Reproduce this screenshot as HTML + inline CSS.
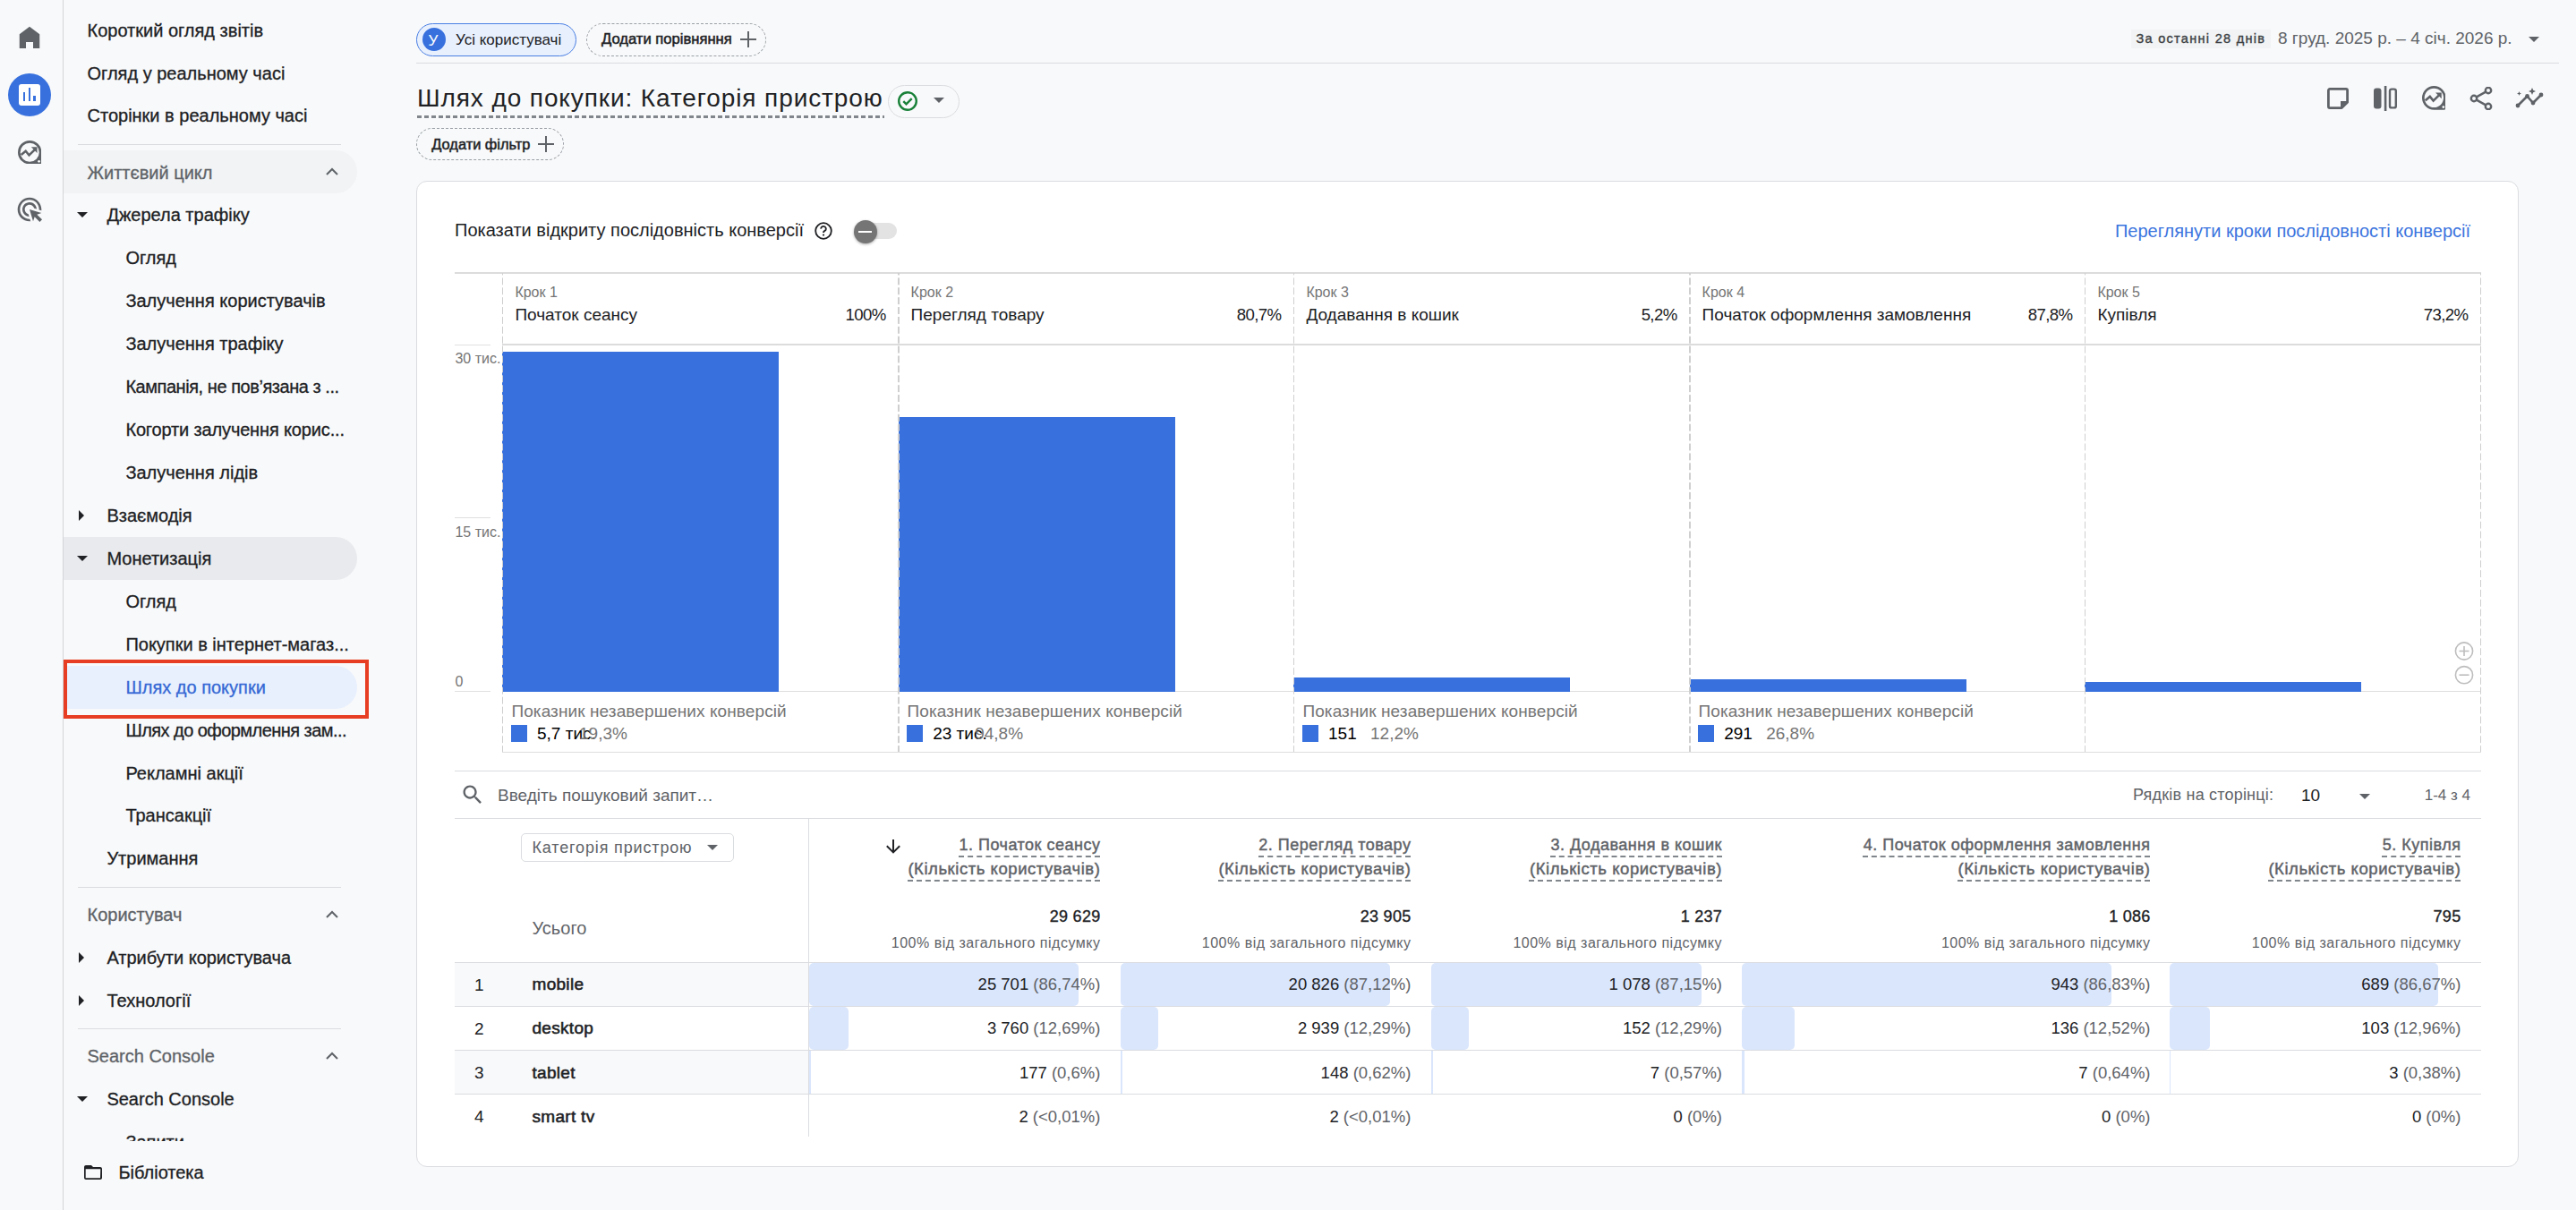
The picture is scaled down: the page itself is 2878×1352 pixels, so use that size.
<!DOCTYPE html>
<html><head><meta charset="utf-8"><style>
html,body{margin:0;padding:0;}
body{width:2878px;height:1352px;overflow:hidden;background:#f8f9fa;position:relative;font-family:"Liberation Sans",sans-serif;}
.t{position:absolute;line-height:1;white-space:nowrap;}
.r{position:absolute;}
.tri-d{width:0;height:0;border-left:6px solid transparent;border-right:6px solid transparent;border-top:6px solid #5f6368;}
.tri-r{width:0;height:0;border-top:6px solid transparent;border-bottom:6px solid transparent;border-left:6px solid #202124;}
</style></head><body>
<div class="r" style="left:70.0px;top:0.0px;width:1.0px;height:1352.0px;background:#d3d5d8;"></div>
<svg class="r" style="left:18px;top:26px" width="30" height="30" viewBox="0 0 24 24"><path fill="#5f6368" d="M3 9.8 12 3l9 6.8V22.4h-5.8v-5.6H8.8v5.6H3z"/></svg>
<div class="r" style="left:9px;top:82px;width:48px;height:48px;border-radius:50%;background:#3871de"></div>
<div class="r" style="left:21px;top:94px;width:24px;height:24px;border-radius:3px;background:#fff"></div>
<div class="r" style="left:25.8px;top:103.0px;width:2.4px;height:9.5px;background:#3871de;"></div>
<div class="r" style="left:31.8px;top:98.0px;width:2.4px;height:14.5px;background:#3871de;"></div>
<div class="r" style="left:37.2px;top:107.0px;width:2.4px;height:5.5px;background:#3871de;"></div>
<svg class="r" style="left:20px;top:156.8px" width="26.4" height="26.4" viewBox="0 0 26 26"><path fill-rule="evenodd" fill="#5f6368" d="M0 13A13 13 0 0 1 26 13V24Q26 26 24 26H13A13 13 0 0 1 0 13ZM2.6 13A10.4 10.4 0 1 0 23.4 13A10.4 10.4 0 1 0 2.6 13Z"/><path fill="none" stroke="#5f6368" stroke-width="2.5" stroke-linejoin="miter" d="M3.6 15.8L8.6 11.6L12.3 16.2L19.2 9.4"/><path fill="#5f6368" d="M14.6 7.2H21.2V13.8Z"/><circle cx="23.2" cy="23" r="1.3" fill="#fff"/></svg>
<svg class="r" style="left:17.4px;top:217.6px" width="32" height="32" viewBox="0 0 24 24"><path fill="#5f6368" d="M11.71 17.99C8.53 17.84 6 15.22 6 12c0-3.31 2.69-6 6-6 3.22 0 5.84 2.53 5.99 5.71l-2.1-.63C15.48 9.31 13.89 8 12 8c-2.21 0-4 1.79-4 4 0 1.89 1.31 3.48 3.08 3.89l.63 2.1zM22 12c0 .3-.01.6-.04.9l-1.970-.59c.01-.1.01-.21.01-.31 0-4.42-3.58-8-8-8s-8 3.58-8 8 3.58 8 8 8c.1 0 .21 0 .31-.01l.59 1.97c-.3.03-.6.04-.9.04-5.52 0-10-4.48-10-10S6.48 2 12 2s10 4.48 10 10zm-3.77 4.26L22 15l-10-3 3 10 1.26-3.77 4.27 4.27 1.98-1.98-4.28-4.26z"/></svg>
<div class="t" style="left:97.5px;top:23.8px;font-size:20px;color:#202124;-webkit-text-stroke:0.3px #202124">Короткий огляд звітів</div>
<div class="t" style="left:97.5px;top:71.6px;font-size:20px;color:#202124;-webkit-text-stroke:0.3px #202124">Огляд у реальному часі</div>
<div class="t" style="left:97.5px;top:119.3px;font-size:20px;color:#202124;-webkit-text-stroke:0.3px #202124">Сторінки в реальному часі</div>
<div class="r" style="left:87.0px;top:161.0px;width:294.0px;height:1.0px;background:#dadce0;"></div>
<div class="r" style="left:71px;top:168px;width:328px;height:48px;background:#f1f3f4;border-radius:0 24px 24px 0"></div>
<div class="t" style="left:97.5px;top:182.5px;font-size:20px;color:#5f6368;-webkit-text-stroke:0.3px #5f6368">Життєвий цикл</div>
<svg class="r" style="left:361px;top:182.4px" width="20" height="20" viewBox="0 0 20 20"><path fill="none" stroke="#5f6368" stroke-width="2" d="M4 13l6-6 6 6"/></svg>
<div class="r tri-d" style="left:86px;top:237.0px;border-top-color:#202124"></div>
<div class="t" style="left:119.4px;top:230.1px;font-size:20px;color:#202124;-webkit-text-stroke:0.3px #202124">Джерела трафіку</div>
<div class="t" style="left:140.4px;top:278.1px;font-size:20px;color:#202124;-webkit-text-stroke:0.3px #202124">Огляд</div>
<div class="t" style="left:140.4px;top:326.1px;font-size:20px;color:#202124;-webkit-text-stroke:0.3px #202124">Залучення користувачів</div>
<div class="t" style="left:140.4px;top:374.1px;font-size:20px;color:#202124;-webkit-text-stroke:0.3px #202124">Залучення трафіку</div>
<div class="t" style="left:140.4px;top:422.1px;font-size:20px;color:#202124;letter-spacing:-0.45px;-webkit-text-stroke:0.3px #202124">Кампанія, не пов’язана з ...</div>
<div class="t" style="left:140.4px;top:470.1px;font-size:20px;color:#202124;letter-spacing:-0.15px;-webkit-text-stroke:0.3px #202124">Когорти залучення корис...</div>
<div class="t" style="left:140.4px;top:518.1px;font-size:20px;color:#202124;-webkit-text-stroke:0.3px #202124">Залучення лідів</div>
<div class="r tri-r" style="left:88px;top:570.0px"></div>
<div class="t" style="left:119.4px;top:566.1px;font-size:20px;color:#202124;-webkit-text-stroke:0.3px #202124">Взаємодія</div>
<div class="r" style="left:71px;top:600px;width:328px;height:48px;background:#e8eaed;border-radius:0 24px 24px 0"></div>
<div class="r tri-d" style="left:86px;top:621.0px;border-top-color:#202124"></div>
<div class="t" style="left:119.4px;top:614.1px;font-size:20px;color:#202124;-webkit-text-stroke:0.3px #202124">Монетизація</div>
<div class="t" style="left:140.4px;top:662.1px;font-size:20px;color:#202124;-webkit-text-stroke:0.3px #202124">Огляд</div>
<div class="t" style="left:140.4px;top:710.1px;font-size:20px;color:#202124;-webkit-text-stroke:0.3px #202124">Покупки в інтернет-магаз...</div>
<div class="r" style="left:71px;top:744px;width:328px;height:48px;background:#e8f0fe;border-radius:0 24px 24px 0"></div>
<div class="t" style="left:140.4px;top:758.1px;font-size:20px;color:#3568d4;-webkit-text-stroke:0.3px #3568d4">Шлях до покупки</div>
<div class="r" style="left:71px;top:737px;width:341px;height:66px;border:4px solid #e73d22;box-sizing:border-box"></div>
<div class="t" style="left:140.4px;top:806.1px;font-size:20px;color:#202124;letter-spacing:-0.55px;-webkit-text-stroke:0.3px #202124">Шлях до оформлення зам...</div>
<div class="t" style="left:140.4px;top:854.1px;font-size:20px;color:#202124;-webkit-text-stroke:0.3px #202124">Рекламні акції</div>
<div class="t" style="left:140.4px;top:901.1px;font-size:20px;color:#202124;-webkit-text-stroke:0.3px #202124">Трансакції</div>
<div class="t" style="left:119.4px;top:949.1px;font-size:20px;color:#202124;-webkit-text-stroke:0.3px #202124">Утримання</div>
<div class="r" style="left:87.0px;top:991.0px;width:294.0px;height:1.0px;background:#dadce0;"></div>
<div class="t" style="left:97.5px;top:1012.1px;font-size:20px;color:#5f6368;-webkit-text-stroke:0.3px #5f6368">Користувач</div>
<svg class="r" style="left:361px;top:1012.0px" width="20" height="20" viewBox="0 0 20 20"><path fill="none" stroke="#5f6368" stroke-width="2" d="M4 13l6-6 6 6"/></svg>
<div class="r tri-r" style="left:88px;top:1064.0px"></div>
<div class="t" style="left:119.4px;top:1060.1px;font-size:20px;color:#202124;-webkit-text-stroke:0.3px #202124">Атрибути користувача</div>
<div class="r tri-r" style="left:88px;top:1112.0px"></div>
<div class="t" style="left:119.4px;top:1108.1px;font-size:20px;color:#202124;-webkit-text-stroke:0.3px #202124">Технології</div>
<div class="r" style="left:87.0px;top:1149.0px;width:294.0px;height:1.0px;background:#dadce0;"></div>
<div class="t" style="left:97.5px;top:1170.1px;font-size:20px;color:#5f6368;-webkit-text-stroke:0.3px #5f6368">Search Console</div>
<svg class="r" style="left:361px;top:1170.0px" width="20" height="20" viewBox="0 0 20 20"><path fill="none" stroke="#5f6368" stroke-width="2" d="M4 13l6-6 6 6"/></svg>
<div class="r tri-d" style="left:86px;top:1225.0px;border-top-color:#202124"></div>
<div class="t" style="left:119.4px;top:1218.1px;font-size:20px;color:#202124;-webkit-text-stroke:0.3px #202124">Search Console</div>
<div class="t" style="left:140.4px;top:1266.1px;font-size:20px;color:#202124;-webkit-text-stroke:0.3px #202124">Запити</div>
<div class="r" style="left:71.0px;top:1275.0px;width:394.0px;height:77.0px;background:#f8f9fa;"></div>
<svg class="r" style="left:92px;top:1298px" width="24" height="24" viewBox="0 0 24 24"><path fill="#202124" d="M20 6h-8l-2-2H4c-1.1 0-1.99.9-1.99 2L2 18c0 1.1.9 2 2 2h16c1.1 0 2-.9 2-2V8c0-1.1-.9-2-2-2zm0 12.3H3.7V8.2h16.6z"/></svg>
<div class="t" style="left:132.4px;top:1300.1px;font-size:20px;color:#202124;-webkit-text-stroke:0.3px #202124">Бібліотека</div>
<div class="r" style="left:465px;top:26px;width:179px;height:37px;box-sizing:border-box;border:1.5px solid #4a7fe3;border-radius:19px;background:#e8f0fe"></div>
<div class="r" style="left:472px;top:31px;width:26px;height:26px;border-radius:50%;background:#3871de"></div>
<div class="t" style="left:478.5px;top:36.6px;font-size:17px;color:#fff">У</div>
<div class="t" style="left:509.0px;top:35.6px;font-size:17px;color:#202124">Усі користувачі</div>
<div class="r" style="left:655px;top:26px;width:201px;height:37px;box-sizing:border-box;border:1px dashed #9aa0a6;border-radius:19px"></div>
<div class="t" style="left:672.0px;top:35.9px;font-size:16.6px;color:#202124;-webkit-text-stroke:0.5px #202124">Додати порівняння</div>
<div class="r" style="left:827.4px;top:43.0px;width:18.0px;height:2.0px;background:#5f6368;"></div>
<div class="r" style="left:835.4px;top:35.0px;width:2.0px;height:18.0px;background:#5f6368;"></div>
<div class="r" style="left:465.0px;top:70.0px;width:2394.0px;height:1.0px;background:#dadce0;"></div>
<div class="r" style="left:2381.0px;top:33.0px;width:156.0px;height:21.0px;background:#f1f3f4;"></div>
<div class="t" style="left:2386.4px;top:35.9px;font-size:14.5px;color:#3c4043;letter-spacing:1.3px;-webkit-text-stroke:0.35px #3c4043">За останні 28 днів</div>
<div class="t" style="left:2545.0px;top:32.9px;font-size:19px;color:#5f6368">8 груд. 2025 р. – 4 січ. 2026 р.</div>
<div class="r tri-d" style="left:2825px;top:40.5px"></div>
<div class="t" style="left:466.0px;top:96.3px;font-size:28px;color:#202124;letter-spacing:0.9px">Шлях до покупки: Категорія пристрою</div>
<div class="r" style="left:466px;top:129px;width:522px;height:3px;background:repeating-linear-gradient(90deg,#80868b 0 5px,transparent 5px 8px)"></div>
<div class="r" style="left:992px;top:95px;width:80px;height:37px;box-sizing:border-box;border:1px solid #dadce0;border-radius:19px"></div>
<svg class="r" style="left:1002px;top:101px" width="24" height="24" viewBox="0 0 24 24"><circle cx="12" cy="12" r="9.8" fill="none" stroke="#188038" stroke-width="2.4"/><path fill="none" stroke="#188038" stroke-width="2.4" d="M7.3 12.2l3.2 3.2 6.2-6.2"/></svg>
<div class="r tri-d" style="left:1043px;top:109px"></div>
<div class="r" style="left:465px;top:143px;width:165px;height:36px;box-sizing:border-box;border:1px dashed #9aa0a6;border-radius:18px"></div>
<div class="t" style="left:482.3px;top:153.1px;font-size:16.4px;color:#202124;-webkit-text-stroke:0.5px #202124">Додати фільтр</div>
<div class="r" style="left:601.4px;top:160.0px;width:18.0px;height:2.0px;background:#5f6368;"></div>
<div class="r" style="left:609.4px;top:152.0px;width:2.0px;height:18.0px;background:#5f6368;"></div>
<svg class="r" style="left:2599px;top:97px" width="26" height="26" viewBox="0 0 26 26"><path fill="none" stroke="#5f6368" stroke-width="2.8" stroke-linejoin="round" d="M4 2.4h18a1.6 1.6 0 0 1 1.6 1.6v13.2l-6.4 6.4H4a1.6 1.6 0 0 1-1.6-1.6V4A1.6 1.6 0 0 1 4 2.4z"/><path fill="#5f6368" d="M16 16h7.6l-7.6 7.6z"/></svg>
<svg class="r" style="left:2651px;top:96px" width="28" height="28" viewBox="0 0 28 28"><rect x="1" y="2.5" width="8.5" height="23" rx="3" fill="#5f6368"/><rect x="12.8" y="0" width="2.6" height="28" fill="#5f6368"/><rect x="19" y="3.6" width="6.8" height="20.8" rx="2" fill="none" stroke="#5f6368" stroke-width="2.4"/></svg>
<svg class="r" style="left:2705.5px;top:96.3px" width="26.7" height="26.7" viewBox="0 0 26 26"><path fill-rule="evenodd" fill="#5f6368" d="M0 13A13 13 0 0 1 26 13V24Q26 26 24 26H13A13 13 0 0 1 0 13ZM2.6 13A10.4 10.4 0 1 0 23.4 13A10.4 10.4 0 1 0 2.6 13Z"/><path fill="none" stroke="#5f6368" stroke-width="2.5" stroke-linejoin="miter" d="M3.6 15.8L8.6 11.6L12.3 16.2L19.2 9.4"/><path fill="#5f6368" d="M14.6 7.2H21.2V13.8Z"/><circle cx="23.2" cy="23" r="1.3" fill="#fff"/></svg>
<svg class="r" style="left:2758px;top:97px" width="28" height="26" viewBox="0 0 28 26"><circle cx="22" cy="4" r="3.2" fill="none" stroke="#5f6368" stroke-width="2.4"/><circle cx="6" cy="13" r="3.2" fill="none" stroke="#5f6368" stroke-width="2.4"/><circle cx="22" cy="22" r="3.2" fill="none" stroke="#5f6368" stroke-width="2.4"/><path stroke="#5f6368" stroke-width="2.4" d="M8.8 11.4l10.4-5.8M8.8 14.6l10.4 5.8"/></svg>
<svg class="r" style="left:2810px;top:97.5px" width="34" height="28" viewBox="0 0 34 28"><path fill="none" stroke="#5f6368" stroke-width="2.6" stroke-linecap="round" stroke-linejoin="round" d="M3 20l10.5-10.5 6.5 7.5 9-9"/><circle cx="3" cy="20" r="2.4" fill="#5f6368"/><circle cx="13.5" cy="9.5" r="2.4" fill="#5f6368"/><circle cx="20" cy="17" r="2.4" fill="#5f6368"/><circle cx="29" cy="8" r="2.4" fill="#5f6368"/><path fill="#5f6368" d="M19 0l1.2 2.8L23 4l-2.8 1.2L19 8l-1.2-2.8L15 4l2.8-1.2z M4.5 4l.7 1.8L7 6.5l-1.8.7L4.5 9l-.7-1.8L2 6.5l1.8-.7z"/></svg>
<div class="r" style="left:465px;top:202px;width:2349px;height:1102px;box-sizing:border-box;background:#fff;border:1px solid #dadce0;border-radius:12px"></div>
<div class="t" style="left:508.0px;top:247.1px;font-size:20px;color:#202124">Показати відкриту послідовність конверсії</div>
<svg class="r" style="left:909px;top:247px" width="22" height="22" viewBox="0 0 24 24"><circle cx="12" cy="12" r="9.6" fill="none" stroke="#202124" stroke-width="2"/><path fill="none" stroke="#202124" stroke-width="2" d="M9 9.4a3 3 0 1 1 4.2 2.7c-.9.5-1.2 1-1.2 2"/><circle cx="12" cy="17" r="1.2" fill="#202124"/></svg>
<div class="r" style="left:955px;top:249px;width:47px;height:18px;border-radius:9px;background:#e3e3e3"></div>
<div class="r" style="left:953.5px;top:246px;width:26px;height:26px;border-radius:50%;background:#757575;box-shadow:0 1px 3px rgba(0,0,0,.35)"></div>
<div class="r" style="left:959.0px;top:258.0px;width:15.0px;height:2.0px;background:#fff;"></div>
<div class="t" style="right:118.0px;top:248.1px;font-size:20px;color:#3b74de">Переглянути кроки послідовності конверсії</div>
<div class="r" style="left:508.0px;top:304.0px;width:2264.0px;height:2.0px;background:#dcdcdc;"></div>
<div class="r" style="left:561.0px;top:384.0px;width:2211.0px;height:2.0px;background:#dcdcdc;"></div>
<div class="r" style="left:561.0px;top:771.8px;width:2211.0px;height:1.2px;background:#dedede;"></div>
<div class="r" style="left:561.0px;top:839.5px;width:2211.0px;height:1.5px;background:#dedede;"></div>
<div class="r" style="left:508.0px;top:384.5px;width:40.0px;height:1.2px;background:#e0e0e0;"></div>
<div class="r" style="left:508.0px;top:578.0px;width:40.0px;height:1.2px;background:#e0e0e0;"></div>
<div class="r" style="left:508.0px;top:771.5px;width:40.0px;height:1.2px;background:#e0e0e0;"></div>
<div class="t" style="left:508.4px;top:393.0px;font-size:16px;color:#757575">30 тис.</div>
<div class="t" style="left:508.4px;top:587.0px;font-size:16px;color:#757575">15 тис.</div>
<div class="t" style="left:508.4px;top:754.0px;font-size:16px;color:#757575">0</div>
<div class="r" style="left:561.4px;top:392.8px;width:309.0px;height:379.8px;background:#3871de;"></div>
<div class="r" style="left:1003.6px;top:466.1px;width:309.0px;height:306.5px;background:#3871de;"></div>
<div class="r" style="left:1445.4px;top:756.7px;width:309.0px;height:15.9px;background:#3871de;"></div>
<div class="r" style="left:1887.6px;top:758.7px;width:309.0px;height:13.9px;background:#3871de;"></div>
<div class="r" style="left:2329.4px;top:762.4px;width:309.0px;height:10.2px;background:#3871de;"></div>
<div class="r" style="left:561.1px;top:305px;width:1.3px;height:535px;background:linear-gradient(180deg,#cfcfcf 0 7.6px,transparent 7.6px 10.9px);background-size:100% 10.9px;background-position:0 5.4px"></div>
<div class="r" style="left:1003.3px;top:305px;width:1.3px;height:535px;background:linear-gradient(180deg,#cfcfcf 0 7.6px,transparent 7.6px 10.9px);background-size:100% 10.9px;background-position:0 5.4px"></div>
<div class="r" style="left:1445.1px;top:305px;width:1.3px;height:535px;background:linear-gradient(180deg,#cfcfcf 0 7.6px,transparent 7.6px 10.9px);background-size:100% 10.9px;background-position:0 5.4px"></div>
<div class="r" style="left:1887.3px;top:305px;width:1.3px;height:535px;background:linear-gradient(180deg,#cfcfcf 0 7.6px,transparent 7.6px 10.9px);background-size:100% 10.9px;background-position:0 5.4px"></div>
<div class="r" style="left:2329.1px;top:305px;width:1.3px;height:535px;background:linear-gradient(180deg,#cfcfcf 0 7.6px,transparent 7.6px 10.9px);background-size:100% 10.9px;background-position:0 5.4px"></div>
<div class="r" style="left:2771.1px;top:305px;width:1.3px;height:535px;background:linear-gradient(180deg,#cfcfcf 0 7.6px,transparent 7.6px 10.9px);background-size:100% 10.9px;background-position:0 5.4px"></div>
<div class="t" style="left:575.4px;top:319.0px;font-size:16px;color:#757575">Крок 1</div>
<div class="t" style="left:575.4px;top:341.9px;font-size:19px;color:#202124">Початок сеансу</div>
<div class="t" style="right:1888.4px;top:343.1px;font-size:18.6px;color:#202124;letter-spacing:-0.6px">100%</div>
<div class="t" style="left:1017.6px;top:319.0px;font-size:16px;color:#757575">Крок 2</div>
<div class="t" style="left:1017.6px;top:341.9px;font-size:19px;color:#202124">Перегляд товару</div>
<div class="t" style="right:1446.6px;top:343.1px;font-size:18.6px;color:#202124;letter-spacing:-0.6px">80,7%</div>
<div class="t" style="left:1459.4px;top:319.0px;font-size:16px;color:#757575">Крок 3</div>
<div class="t" style="left:1459.4px;top:341.9px;font-size:19px;color:#202124">Додавання в кошик</div>
<div class="t" style="right:1004.4px;top:343.1px;font-size:18.6px;color:#202124;letter-spacing:-0.6px">5,2%</div>
<div class="t" style="left:1901.6px;top:319.0px;font-size:16px;color:#757575">Крок 4</div>
<div class="t" style="left:1901.6px;top:341.9px;font-size:19px;color:#202124">Початок оформлення замовлення</div>
<div class="t" style="right:562.6px;top:343.1px;font-size:18.6px;color:#202124;letter-spacing:-0.6px">87,8%</div>
<div class="t" style="left:2343.4px;top:319.0px;font-size:16px;color:#757575">Крок 5</div>
<div class="t" style="left:2343.4px;top:341.9px;font-size:19px;color:#202124">Купівля</div>
<div class="t" style="right:120.6px;top:343.1px;font-size:18.6px;color:#202124;letter-spacing:-0.6px">73,2%</div>
<div class="t" style="left:571.4px;top:784.9px;font-size:19px;color:#757575;letter-spacing:0.1px">Показник незавершених конверсій</div>
<div class="r" style="left:570.7px;top:810.3px;width:18.6px;height:18.6px;background:#3871de;"></div>
<div class="t" style="left:600.0px;top:809.7px;font-size:19px;color:#000">5,7 тис.</div>
<div class="t" style="left:647.0px;top:809.7px;font-size:19px;color:#757575">19,3%</div>
<div class="t" style="left:1013.6px;top:784.9px;font-size:19px;color:#757575;letter-spacing:0.1px">Показник незавершених конверсій</div>
<div class="r" style="left:1012.9px;top:810.3px;width:18.6px;height:18.6px;background:#3871de;"></div>
<div class="t" style="left:1042.2px;top:809.7px;font-size:19px;color:#000">23 тис.</div>
<div class="t" style="left:1089.2px;top:809.7px;font-size:19px;color:#757575">94,8%</div>
<div class="t" style="left:1455.4px;top:784.9px;font-size:19px;color:#757575;letter-spacing:0.1px">Показник незавершених конверсій</div>
<div class="r" style="left:1454.7px;top:810.3px;width:18.6px;height:18.6px;background:#3871de;"></div>
<div class="t" style="left:1484.0px;top:809.7px;font-size:19px;color:#000">151</div>
<div class="t" style="left:1531.0px;top:809.7px;font-size:19px;color:#757575">12,2%</div>
<div class="t" style="left:1897.6px;top:784.9px;font-size:19px;color:#757575;letter-spacing:0.1px">Показник незавершених конверсій</div>
<div class="r" style="left:1896.9px;top:810.3px;width:18.6px;height:18.6px;background:#3871de;"></div>
<div class="t" style="left:1926.2px;top:809.7px;font-size:19px;color:#000">291</div>
<div class="t" style="left:1973.2px;top:809.7px;font-size:19px;color:#757575">26,8%</div>
<svg class="r" style="left:2741px;top:716px" width="24" height="50" viewBox="0 0 24 50"><g fill="none" stroke="#bdbdbd" stroke-width="1.6"><circle cx="12" cy="11.5" r="9.6"/><path d="M6.5 11.5h11M12 6v11"/><circle cx="12" cy="38.2" r="9.6"/><path d="M6.5 38.2h11"/></g></svg>
<div class="r" style="left:508.0px;top:860.5px;width:2264.0px;height:1.2px;background:#dadce0;"></div>
<svg class="r" style="left:514px;top:874px" width="28" height="28" viewBox="0 0 24 24"><path fill="#5f6368" d="M15.5 14h-.79l-.28-.27C15.41 12.59 16 11.11 16 9.5 16 5.91 13.09 3 9.5 3S3 5.91 3 9.5 5.91 16 9.5 16c1.61 0 3.09-.59 4.23-1.57l.27.28v.79l5 4.99L20.49 19l-4.99-5zm-6 0C7.01 14 5 11.99 5 9.5S7.01 5 9.5 5 14 7.01 14 9.5 11.99 14 9.5 14z"/></svg>
<div class="t" style="left:556.0px;top:879.3px;font-size:19px;color:#5f6368">Введіть пошуковий запит…</div>
<div class="t" style="left:2383.0px;top:878.8px;font-size:18px;color:#5f6368;letter-spacing:0.2px">Рядків на сторінці:</div>
<div class="t" style="left:2571.0px;top:878.9px;font-size:19px;color:#202124">10</div>
<div class="r tri-d" style="left:2636px;top:887px"></div>
<div class="t" style="right:118.0px;top:879.6px;font-size:17px;color:#5f6368">1-4 з 4</div>
<div class="r" style="left:508.0px;top:913.5px;width:2264.0px;height:1.2px;background:#dadce0;"></div>
<div class="r" style="left:903.0px;top:914.0px;width:1.2px;height:356.0px;background:#dadce0;"></div>
<div class="r" style="left:582px;top:931px;width:238px;height:32px;box-sizing:border-box;border:1px solid #dadce0;border-radius:5px"></div>
<div class="t" style="left:594.5px;top:937.7px;font-size:18px;color:#5f6368;letter-spacing:0.85px">Категорія пристрою</div>
<div class="r tri-d" style="left:790px;top:944px"></div>
<svg class="r" style="left:986px;top:934px" width="24" height="24" viewBox="0 0 24 24"><path fill="#202124" d="M11 4h2v12l5.5-5.5 1.4 1.4L12 19.8 4.1 11.9l1.4-1.4L11 16z"/></svg>
<div class="t" style="right:1648.6px;top:935.3px;font-size:18px;color:#5f6368;letter-spacing:0.5px;text-decoration:underline dashed #80868b;text-decoration-thickness:2px;text-underline-offset:6px;-webkit-text-stroke:0.45px #5f6368">1. Початок сеансу</div>
<div class="t" style="right:1648.6px;top:962.3px;font-size:18.5px;color:#5f6368;letter-spacing:0.55px;text-decoration:underline dashed #80868b;text-decoration-thickness:2px;text-underline-offset:6px;-webkit-text-stroke:0.45px #5f6368">(Кількість користувачів)</div>
<div class="t" style="right:1648.6px;top:1014.8px;font-size:18px;color:#202124;letter-spacing:0.25px;-webkit-text-stroke:0.35px #202124">29 629</div>
<div class="t" style="right:1648.6px;top:1046.1px;font-size:16px;color:#5f6368;letter-spacing:0.5px">100% від загального підсумку</div>
<div class="t" style="right:1301.6px;top:935.3px;font-size:18px;color:#5f6368;letter-spacing:0.5px;text-decoration:underline dashed #80868b;text-decoration-thickness:2px;text-underline-offset:6px;-webkit-text-stroke:0.45px #5f6368">2. Перегляд товару</div>
<div class="t" style="right:1301.6px;top:962.3px;font-size:18.5px;color:#5f6368;letter-spacing:0.55px;text-decoration:underline dashed #80868b;text-decoration-thickness:2px;text-underline-offset:6px;-webkit-text-stroke:0.45px #5f6368">(Кількість користувачів)</div>
<div class="t" style="right:1301.6px;top:1014.8px;font-size:18px;color:#202124;letter-spacing:0.25px;-webkit-text-stroke:0.35px #202124">23 905</div>
<div class="t" style="right:1301.6px;top:1046.1px;font-size:16px;color:#5f6368;letter-spacing:0.5px">100% від загального підсумку</div>
<div class="t" style="right:954.0px;top:935.3px;font-size:18px;color:#5f6368;letter-spacing:0.5px;text-decoration:underline dashed #80868b;text-decoration-thickness:2px;text-underline-offset:6px;-webkit-text-stroke:0.45px #5f6368">3. Додавання в кошик</div>
<div class="t" style="right:954.0px;top:962.3px;font-size:18.5px;color:#5f6368;letter-spacing:0.55px;text-decoration:underline dashed #80868b;text-decoration-thickness:2px;text-underline-offset:6px;-webkit-text-stroke:0.45px #5f6368">(Кількість користувачів)</div>
<div class="t" style="right:954.0px;top:1014.8px;font-size:18px;color:#202124;letter-spacing:0.25px;-webkit-text-stroke:0.35px #202124">1 237</div>
<div class="t" style="right:954.0px;top:1046.1px;font-size:16px;color:#5f6368;letter-spacing:0.5px">100% від загального підсумку</div>
<div class="t" style="right:475.5px;top:935.3px;font-size:18px;color:#5f6368;letter-spacing:0.5px;text-decoration:underline dashed #80868b;text-decoration-thickness:2px;text-underline-offset:6px;-webkit-text-stroke:0.45px #5f6368">4. Початок оформлення замовлення</div>
<div class="t" style="right:475.5px;top:962.3px;font-size:18.5px;color:#5f6368;letter-spacing:0.55px;text-decoration:underline dashed #80868b;text-decoration-thickness:2px;text-underline-offset:6px;-webkit-text-stroke:0.45px #5f6368">(Кількість користувачів)</div>
<div class="t" style="right:475.5px;top:1014.8px;font-size:18px;color:#202124;letter-spacing:0.25px;-webkit-text-stroke:0.35px #202124">1 086</div>
<div class="t" style="right:475.5px;top:1046.1px;font-size:16px;color:#5f6368;letter-spacing:0.5px">100% від загального підсумку</div>
<div class="t" style="right:128.6px;top:935.3px;font-size:18px;color:#5f6368;letter-spacing:0.5px;text-decoration:underline dashed #80868b;text-decoration-thickness:2px;text-underline-offset:6px;-webkit-text-stroke:0.45px #5f6368">5. Купівля</div>
<div class="t" style="right:128.6px;top:962.3px;font-size:18.5px;color:#5f6368;letter-spacing:0.55px;text-decoration:underline dashed #80868b;text-decoration-thickness:2px;text-underline-offset:6px;-webkit-text-stroke:0.45px #5f6368">(Кількість користувачів)</div>
<div class="t" style="right:128.6px;top:1014.8px;font-size:18px;color:#202124;letter-spacing:0.25px;-webkit-text-stroke:0.35px #202124">795</div>
<div class="t" style="right:128.6px;top:1046.1px;font-size:16px;color:#5f6368;letter-spacing:0.5px">100% від загального підсумку</div>
<div class="t" style="left:594.5px;top:1026.6px;font-size:20px;color:#5f6368">Усього</div>
<div class="r" style="left:508.0px;top:1076.0px;width:395.0px;height:48.0px;background:#f8f9fa;"></div>
<div class="r" style="left:508.0px;top:1174.0px;width:395.0px;height:48.0px;background:#f8f9fa;"></div>
<div class="r" style="left:508.0px;top:1075.0px;width:2264.0px;height:1.0px;background:#dadce0;"></div>
<div class="r" style="left:508.0px;top:1124.0px;width:2264.0px;height:1.0px;background:#dadce0;"></div>
<div class="r" style="left:508.0px;top:1173.0px;width:2264.0px;height:1.0px;background:#dadce0;"></div>
<div class="r" style="left:508.0px;top:1222.0px;width:2264.0px;height:1.0px;background:#dadce0;"></div>
<div class="t" style="left:530.0px;top:1090.9px;font-size:19px;color:#202124">1</div>
<div class="t" style="left:594.5px;top:1090.1px;font-size:19px;color:#202124;letter-spacing:0.3px;-webkit-text-stroke:0.55px #202124">mobile</div>
<div class="r" style="left:904.0px;top:1076.0px;width:300.6px;height:47.6px;background:#dae6fc;border-radius:5px"></div>
<div class="t" style="right:1648.6px;top:1091.3px;font-size:18.5px;color:#202124">25 701 <span style="color:#5f6368">(86,74%)</span></div>
<div class="r" style="left:1251.5px;top:1076.0px;width:301.9px;height:47.6px;background:#dae6fc;border-radius:5px"></div>
<div class="t" style="right:1301.6px;top:1091.3px;font-size:18.5px;color:#202124">20 826 <span style="color:#5f6368">(87,12%)</span></div>
<div class="r" style="left:1598.5px;top:1076.0px;width:302.0px;height:47.6px;background:#dae6fc;border-radius:5px"></div>
<div class="t" style="right:954.0px;top:1091.3px;font-size:18.5px;color:#202124">1 078 <span style="color:#5f6368">(87,15%)</span></div>
<div class="r" style="left:1945.5px;top:1076.0px;width:413.3px;height:47.6px;background:#dae6fc;border-radius:5px"></div>
<div class="t" style="right:475.5px;top:1091.3px;font-size:18.5px;color:#202124">943 <span style="color:#5f6368">(86,83%)</span></div>
<div class="r" style="left:2423.5px;top:1076.0px;width:300.7px;height:47.6px;background:#dae6fc;border-radius:5px"></div>
<div class="t" style="right:128.6px;top:1091.3px;font-size:18.5px;color:#202124">689 <span style="color:#5f6368">(86,67%)</span></div>
<div class="t" style="left:530.0px;top:1139.9px;font-size:19px;color:#202124">2</div>
<div class="t" style="left:594.5px;top:1139.1px;font-size:19px;color:#202124;letter-spacing:0.3px;-webkit-text-stroke:0.55px #202124">desktop</div>
<div class="r" style="left:904.0px;top:1125.0px;width:44.0px;height:47.6px;background:#dae6fc;border-radius:5px"></div>
<div class="t" style="right:1648.6px;top:1140.3px;font-size:18.5px;color:#202124">3 760 <span style="color:#5f6368">(12,69%)</span></div>
<div class="r" style="left:1251.5px;top:1125.0px;width:42.6px;height:47.6px;background:#dae6fc;border-radius:5px"></div>
<div class="t" style="right:1301.6px;top:1140.3px;font-size:18.5px;color:#202124">2 939 <span style="color:#5f6368">(12,29%)</span></div>
<div class="r" style="left:1598.5px;top:1125.0px;width:42.6px;height:47.6px;background:#dae6fc;border-radius:5px"></div>
<div class="t" style="right:954.0px;top:1140.3px;font-size:18.5px;color:#202124">152 <span style="color:#5f6368">(12,29%)</span></div>
<div class="r" style="left:1945.5px;top:1125.0px;width:59.6px;height:47.6px;background:#dae6fc;border-radius:5px"></div>
<div class="t" style="right:475.5px;top:1140.3px;font-size:18.5px;color:#202124">136 <span style="color:#5f6368">(12,52%)</span></div>
<div class="r" style="left:2423.5px;top:1125.0px;width:45.0px;height:47.6px;background:#dae6fc;border-radius:5px"></div>
<div class="t" style="right:128.6px;top:1140.3px;font-size:18.5px;color:#202124">103 <span style="color:#5f6368">(12,96%)</span></div>
<div class="t" style="left:530.0px;top:1189.4px;font-size:19px;color:#202124">3</div>
<div class="t" style="left:594.5px;top:1188.6px;font-size:19px;color:#202124;letter-spacing:0.3px;-webkit-text-stroke:0.55px #202124">tablet</div>
<div class="r" style="left:904.0px;top:1174.4px;width:2.1px;height:47.6px;background:#dae6fc;"></div>
<div class="t" style="right:1648.6px;top:1189.8px;font-size:18.5px;color:#202124">177 <span style="color:#5f6368">(0,6%)</span></div>
<div class="r" style="left:1251.5px;top:1174.4px;width:2.1px;height:47.6px;background:#dae6fc;"></div>
<div class="t" style="right:1301.6px;top:1189.8px;font-size:18.5px;color:#202124">148 <span style="color:#5f6368">(0,62%)</span></div>
<div class="r" style="left:1598.5px;top:1174.4px;width:2.0px;height:47.6px;background:#dae6fc;"></div>
<div class="t" style="right:954.0px;top:1189.8px;font-size:18.5px;color:#202124">7 <span style="color:#5f6368">(0,57%)</span></div>
<div class="r" style="left:1945.5px;top:1174.4px;width:3.0px;height:47.6px;background:#dae6fc;"></div>
<div class="t" style="right:475.5px;top:1189.8px;font-size:18.5px;color:#202124">7 <span style="color:#5f6368">(0,64%)</span></div>
<div class="r" style="left:2423.5px;top:1174.4px;width:1.6px;height:47.6px;background:#dae6fc;"></div>
<div class="t" style="right:128.6px;top:1189.8px;font-size:18.5px;color:#202124">3 <span style="color:#5f6368">(0,38%)</span></div>
<div class="t" style="left:530.0px;top:1238.4px;font-size:19px;color:#202124">4</div>
<div class="t" style="left:594.5px;top:1237.6px;font-size:19px;color:#202124;letter-spacing:0.3px;-webkit-text-stroke:0.55px #202124">smart tv</div>
<div class="t" style="right:1648.6px;top:1238.8px;font-size:18.5px;color:#202124">2 <span style="color:#5f6368">(&lt;0,01%)</span></div>
<div class="t" style="right:1301.6px;top:1238.8px;font-size:18.5px;color:#202124">2 <span style="color:#5f6368">(&lt;0,01%)</span></div>
<div class="t" style="right:954.0px;top:1238.8px;font-size:18.5px;color:#202124">0 <span style="color:#5f6368">(0%)</span></div>
<div class="t" style="right:475.5px;top:1238.8px;font-size:18.5px;color:#202124">0 <span style="color:#5f6368">(0%)</span></div>
<div class="t" style="right:128.6px;top:1238.8px;font-size:18.5px;color:#202124">0 <span style="color:#5f6368">(0%)</span></div>
</body></html>
